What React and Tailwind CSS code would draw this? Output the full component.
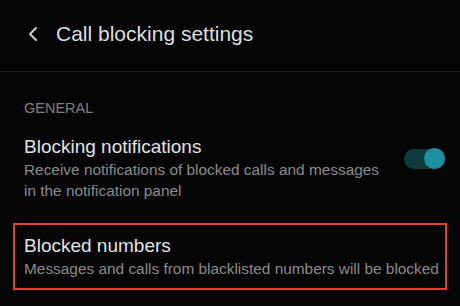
import { ChevronLeft } from 'lucide-react';

function Toggle() {
    return (
        <div className="relative mt-[14px] flex h-[20px] w-[40px] shrink-0 items-center rounded-full bg-[#0f3b3e]">
            <div className="absolute right-[-1px] h-[21px] w-[21px] rounded-full bg-[#1e8fa0]" />
        </div>
    );
}

export default function App() {
    return (
        <div
            className="flex h-[306px] w-[460px] flex-col overflow-hidden bg-[#050505]"
            style={{ fontFamily: '"Liberation Sans", Arial, sans-serif' }}
        >
            <div className="flex h-[71px] items-center gap-[11px] pl-[21px] pb-[4px]">
                <ChevronLeft size={24} strokeWidth={1.8} className="text-[#d8d8d8]" />
                <span className="text-[21px] text-[#dedede]">Call blocking settings</span>
            </div>
            <div className="h-px bg-[#1d1d1d]" />

            <div className="px-[24px] pt-[26px] text-[14.5px] text-[#7f7f7f]">GENERAL</div>

            <div className="flex items-start justify-between pt-[15px] pl-[24px] pr-[16px]">
                <div className="flex flex-col">
                    <span className="text-[19px] leading-[24px] text-[#e2e2e2]">Blocking notifications</span>
                    <span className="text-[15.4px] leading-[21px] text-[#8a8a8a]">
                        Receive notifications of blocked calls and messages
                        <br />
                        in the notification panel
                    </span>
                </div>
                <Toggle />
            </div>

            <div className="mx-[13px] mt-[22px] flex h-[67px] flex-col justify-center border-2 border-[#e3402d] pl-[9px]">
                <span className="text-[19px] leading-[24px] text-[#e2e2e2]">Blocked numbers</span>
                <span className="text-[15.4px] leading-[21px] text-[#8a8a8a]">
                    Messages and calls from blacklisted numbers will be blocked
                </span>
            </div>
        </div>
    );
}
